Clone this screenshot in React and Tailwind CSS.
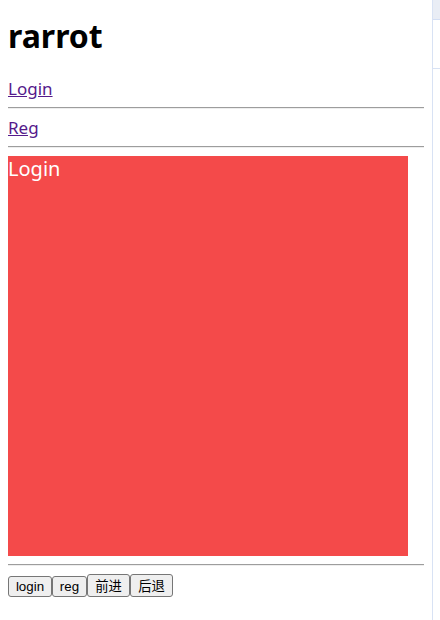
import React from "react";

function Rule({ className = "" }) {
  return <div className={"border-t border-b border-t-[#9d9d9d] border-b-[#eeeeee] " + className} />;
}

export default function App() {
  const btn =
    "bg-[#efefef] border border-[#767676] rounded-[3px] text-black text-[13.33px] leading-none flex items-center justify-center";

  return (
    <div className="flex min-h-[620px] bg-white" style={{ fontFamily: '"Noto Sans", sans-serif' }}>
      <div className="w-[432px] p-2">
        <h1 className="mt-[12px] text-[32px] leading-[32px] font-bold text-black">rarrot</h1>

        <a href="#login" className="block mt-[25px] w-fit text-[17px] leading-[24px] text-[#551a8b] underline">
          Login
        </a>
        <Rule className="mt-[6px]" />
        <a href="#reg" className="block mt-[7px] w-fit text-[17px] leading-[24px] text-[#551a8b] underline">
          Reg
        </a>
        <Rule className="mt-[6px]" />

        <div className="mt-[8px] w-[400px] h-[400px] bg-[#f44a4a] pt-[3px]">
          <div className="text-[20px] leading-none text-white">Login</div>
        </div>

        <Rule className="mt-[8px]" />

        <div className="mt-[8px] flex items-end">
          <button className={btn + " w-[44px] h-[21px]"} style={{ fontFamily: '"Liberation Sans", Arial, sans-serif' }}>
            login
          </button>
          <button className={btn + " w-[35px] h-[21px]"} style={{ fontFamily: '"Liberation Sans", Arial, sans-serif' }}>
            reg
          </button>
          <button className={btn + " w-[43px] h-[23px]"} style={{ fontFamily: '"Noto Sans CJK SC", sans-serif' }}>
            前进
          </button>
          <button className={btn + " w-[43px] h-[23px]"} style={{ fontFamily: '"Noto Sans CJK SC", sans-serif' }}>
            后退
          </button>
        </div>
      </div>

      <div className="flex-1 border-l border-[#d8e2f4]">
        <div className="h-[20px] bg-[#e9edf5] border-b border-[#d3def4]" />
        <div className="h-[49px] border-b border-[#d8e2f4]" />
      </div>
    </div>
  );
}
